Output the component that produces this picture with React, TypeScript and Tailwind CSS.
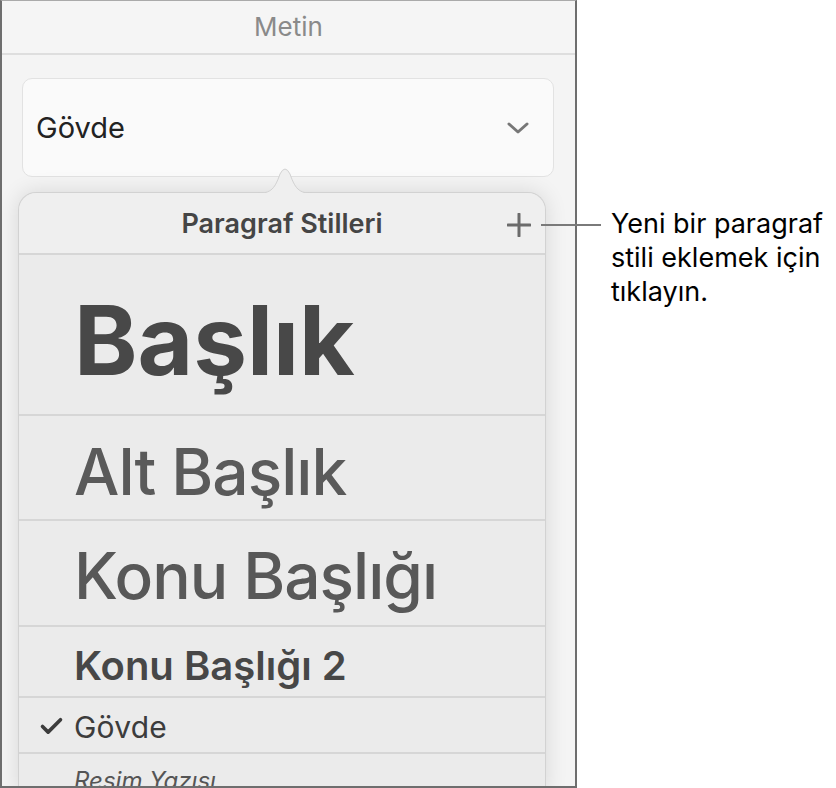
import { Check } from "lucide-react";

const rows = [
  { label: "Başlık", cls: "h-[161px] pt-[37px] text-[96px] font-bold text-[#484848]" },
  { label: "Alt Başlık", cls: "h-[105px] pt-[24px] text-[64px] font-medium tracking-[-1px] text-[#5a5a5a]" },
  { label: "Konu Başlığı", cls: "h-[106px] pt-[23px] text-[64px] font-medium tracking-[-1px] text-[#585858]" },
  { label: "Konu Başlığı 2", cls: "h-[71px] pt-[19px] text-[40px] font-semibold text-[#474747]" },
];

export default function App() {
  return (
    <div className="relative flex h-[788px] w-[836px] overflow-hidden bg-white font-['Inter',sans-serif]">
      {/* app panel */}
      <div className="flex h-[788px] w-[577px] shrink-0 flex-col overflow-hidden border-x-2 border-t border-b-2 border-x-[#6e6e6e] border-t-[#aaaaaa] border-b-[#6e6e6e] bg-[#f4f4f4]">
        <div className="flex h-[54px] shrink-0 items-center justify-center border-b-2 border-[#dedede] bg-[#f5f5f5] text-[26px] leading-none text-[#8a8a8a]">
          Metin
        </div>

        {/* style dropdown */}
        <div className="ml-[20px] mt-[23px] flex h-[99px] w-[532px] shrink-0 items-center justify-between rounded-[10px] border border-[#e2e2e2] bg-[#fafafa] pl-[13px] pr-[24px]">
          <span className="text-[29px] leading-none text-[#222]">Gövde</span>
          <svg width="22" height="12" viewBox="0 0 22 12" fill="none">
            <path d="M2 2l9 8 9-8" stroke="#777" strokeWidth="3" strokeLinecap="round" strokeLinejoin="round" />
          </svg>
        </div>

        {/* popover */}
        <div className="relative ml-[16px] mt-[15px] flex w-[528px] flex-1 flex-col rounded-t-[18px] border-x border-t border-[#d2d2d2] bg-[#ebebeb] shadow-[0_0_22px_rgba(0,0,0,0.12)]">
          <svg className="absolute left-[235px] top-[-27px]" width="62" height="28" viewBox="0 0 62 28">
            <path d="M0 27.5 C16 27.5 20 25 26 8 Q31 -2 36 8 C42 25 46 27.5 62 27.5 Z" fill="#efefef" />
            <path d="M0 27.5 C16 27.5 20 25 26 8 Q31 -2 36 8 C42 25 46 27.5 62 27.5" fill="none" stroke="#d2d2d2" strokeWidth="1" />
          </svg>
          <div className="relative flex h-[62px] shrink-0 items-center justify-center rounded-t-[18px] border-b-2 border-[#d6d6d6] bg-[#efefef]">
            <span className="text-[27px] font-semibold leading-none text-[#454545]">Paragraf Stilleri</span>
            <svg className="absolute right-[14px] top-[20px]" width="24" height="24" viewBox="0 0 24 24">
              <path d="M12 1v22M1 12h22" stroke="#6b6b6b" strokeWidth="3" strokeLinecap="round" />
            </svg>
          </div>

          {rows.map((r) => (
            <div key={r.label} className={`shrink-0 border-b-2 border-[#d6d6d6] pl-[55px] leading-none ${r.cls}`}>
              {r.label}
            </div>
          ))}

          <div className="flex h-[56px] shrink-0 items-start border-b-2 border-[#d6d6d6] pl-[19px] pt-[14px] text-[#3c3c3c]">
            <Check size={27} strokeWidth={3.2} className="mr-[9px] mt-[1px] text-[#3c3c3c]" />
            <span className="text-[30px] leading-none tracking-[0.2px]">Gövde</span>
          </div>

          <div className="shrink-0 pl-[55px] pt-[15px] text-[24px] italic leading-none text-[#555]">Resim Yazısı</div>
        </div>
      </div>

      {/* callout line */}
      <div className="absolute left-[541px] top-[224px] h-[2px] w-[60px] bg-[#7a7a7a]" />

      <div className="whitespace-nowrap pl-[34px] pt-[207px] text-[27px] leading-[34px] text-black">
        Yeni bir paragraf
        <br />
        stili eklemek için
        <br />
        tıklayın.
      </div>
    </div>
  );
}
